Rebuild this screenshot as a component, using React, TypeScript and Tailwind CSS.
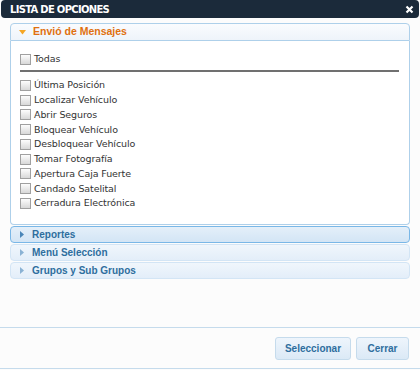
import { useState } from "react"

const items = [
  "Última Posición",
  "Localizar Vehículo",
  "Abrir Seguros",
  "Bloquear Vehículo",
  "Desbloquear Vehículo",
  "Tomar Fotografía",
  "Apertura Caja Fuerte",
  "Candado Satelital",
  "Cerradura Electrónica",
]

const sections = ["Reportes", "Menú Selección", "Grupos y Sub Grupos"]

function Check({ checked, onChange }: { checked: boolean; onChange: () => void }) {
  return (
    <button
      onClick={onChange}
      className="w-[11px] h-[11px] border border-[#a0a0a0] bg-gradient-to-b from-[#fdfdfd] to-[#d8d8d8] flex items-center justify-center shrink-0"
    >
      {checked && <span className="text-[9px] leading-none text-[#333]">✓</span>}
    </button>
  )
}

export default function App() {
  const [checked, setChecked] = useState<Record<string, boolean>>({})
  const toggle = (k: string) => setChecked((c) => ({ ...c, [k]: !c[k] }))

  return (
    <div className="w-[420px] h-[370px] bg-[#fcfcfc] flex flex-col font-['DejaVu_Sans',sans-serif] overflow-hidden">
      {/* Title bar */}
      <div className="h-[18px] mx-[1px] bg-[#1b2a3a] rounded-[4px] flex items-center justify-between pl-[9px] pr-[5px] shrink-0">
        <span className="text-white text-[10px] font-bold tracking-[-0.7px]">LISTA DE OPCIONES</span>
        <svg width="9" height="9" viewBox="0 0 9 9">
          <path d="M1.5 1.5 L7.5 7.5 M7.5 1.5 L1.5 7.5" stroke="#fff" strokeWidth="2.2" />
        </svg>
      </div>

      {/* Accordion */}
      <div className="px-[10px] pt-[5px] flex-1 flex flex-col gap-[1px]">
        <div className="flex flex-col">
          <div className="h-[18px] border border-[#aed0ea] rounded-t-[4px] bg-gradient-to-b from-[#fafcfe] to-[#eef4fa] flex items-center pl-[8px] gap-[7px]">
            <svg width="7" height="5" viewBox="0 0 7 5">
              <path d="M0 0 H7 L3.5 4.5 Z" fill="#f5a623" />
            </svg>
            <span className="text-[#e0700f] text-[10.5px] font-bold font-['Liberation_Sans',sans-serif]">Envió de Mensajes</span>
          </div>
          <div className="h-[184px] bg-white border border-t-0 border-[#aed0ea] rounded-b-[4px] pl-[9px] pr-[9px] pt-[12px]">
            <label className="flex items-center gap-[3px] h-[13px] text-[9.5px] text-[#333] tracking-[-0.1px]">
              <Check checked={!!checked.todas} onChange={() => toggle("todas")} />
              <span>Todas</span>
            </label>
            <div className="mt-[4px] h-[2px] bg-[#707070] mr-[1px]" />
            <div className="mt-[6px] flex flex-col">
              {items.map((it) => (
                <label key={it} className="flex items-center gap-[3px] h-[14.75px] text-[9.5px] text-[#333] tracking-[-0.1px]">
                  <Check checked={!!checked[it]} onChange={() => toggle(it)} />
                  <span>{it}</span>
                </label>
              ))}
            </div>
          </div>
        </div>

        {sections.map((s, i) => (
          <div
            key={s}
            className={
              "h-[17px] rounded-[4px] border flex items-center pl-[9px] gap-[8px] " +
              (i === 0
                ? "border-[#79b7e7] bg-gradient-to-b from-[#e4eff9] to-[#d3e5f5]"
                : "border-[#d3e5f5] bg-gradient-to-b from-[#f0f6fc] to-[#e3eef9]")
            }
          >
            <svg width="4" height="7" viewBox="0 0 4 7">
              <path d="M0 0 L4 3.5 L0 7 Z" fill={i === 0 ? "#4a86b8" : "#8ab2d4"} />
            </svg>
            <span className="text-[#2e6e9e] text-[10px] font-bold font-['Liberation_Sans',sans-serif]">{s}</span>
          </div>
        ))}
      </div>

      {/* Footer */}
      <div className="h-[42px] border-t border-b border-[#c5dbec] flex items-center justify-end pr-[11px] gap-[5px] shrink-0 mb-[1px]">
        <button className="w-[76px] h-[23px] rounded-[3px] border border-[#c5dbec] bg-gradient-to-b from-[#eef5fc] to-[#dbe9f6] text-[#2e6e9e] text-[10px] font-bold font-['Liberation_Sans',sans-serif]">
          Seleccionar
        </button>
        <button className="w-[53px] h-[23px] rounded-[3px] border border-[#c5dbec] bg-gradient-to-b from-[#eef5fc] to-[#dbe9f6] text-[#2e6e9e] text-[10px] font-bold font-['Liberation_Sans',sans-serif]">
          Cerrar
        </button>
      </div>
    </div>
  )
}
